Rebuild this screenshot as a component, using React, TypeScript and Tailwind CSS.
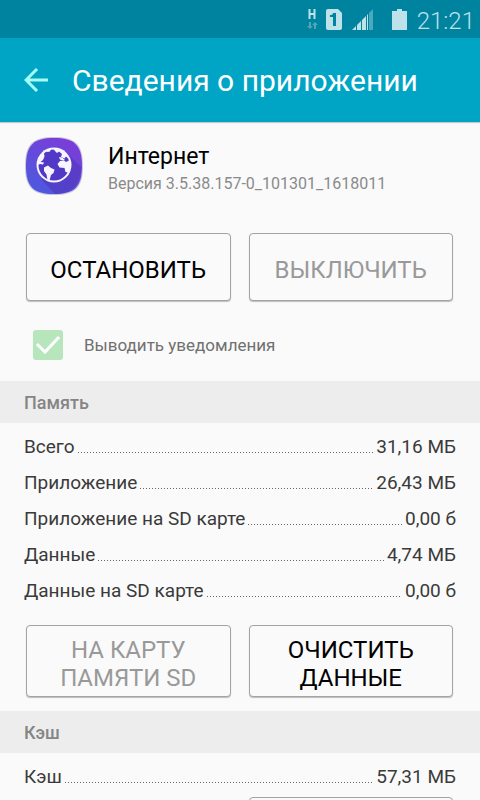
import type { ReactNode } from "react";

type Entry = { label: string; value: string };

const memory: Entry[] = [
  { label: "Всего", value: "31,16 МБ" },
  { label: "Приложение", value: "26,43 МБ" },
  { label: "Приложение на SD карте", value: "0,00 б" },
  { label: "Данные", value: "4,74 МБ" },
  { label: "Данные на SD карте", value: "0,00 б" },
];

function StatusBar() {
  return (
    <div className="flex h-[38px] shrink-0 items-center justify-end bg-[#00839f] pr-[5px] text-[#bde2ea]">
      <svg width="12" height="22" viewBox="0 0 12 22" className="mr-[7px]" aria-label="HSPA">
        <path d="M2.500 1v10M7.500 1v10M2 6h6" stroke="currentColor" strokeWidth="2" fill="none" />
        <g fill="#4da8bb">
          <path d="M2 14h2v4h2l-3 3-3-3h2zM7 21h2v-4h2l-3-3-3 3h2z" />
        </g>
      </svg>
      <svg width="16" height="22" viewBox="0 0 16 22" className="mr-2.5" aria-label="SIM 1">
        <path fill="currentColor" d="M2 1h10l4 4v15q0 2-2 2H2q-2 0-2-2V3q0-2 2-2z" />
        <path fill="#00839f" d="M7 5h3v13H7V9H4V7q3 0 3-2z" />
      </svg>
      <svg width="21" height="22" viewBox="0 0 21 22" className="mr-[19px]" aria-label="Сигнал">
        <path fill="currentColor" d="M0 22l4-4v4zM5 17l4-4v9H5zM10 12l4-4v14h-4z" />
        <path fill="currentColor" d="M15 7l1-1v16h-1z" />
        <path fill="#4da8bb" d="M17 5l4-4v21h-4z" />
      </svg>
      <svg width="15" height="22" viewBox="0 0 15 22" className="mr-2.5" aria-label="Батарея">
        <path fill="currentColor" d="M5 1h5v2h5v19H0V3h5z" />
      </svg>
      <span className="pt-1 text-2xl font-light leading-7">21:21</span>
    </div>
  );
}

function AppIcon() {
  return (
    <svg width="60" height="60" viewBox="0 0 60 60" aria-label="Интернет">
      <defs>
        <linearGradient id="tile" x1="0.8" y1="0" x2="0.2" y2="1">
          <stop offset="0" stopColor="#7d3bd8" />
          <stop offset="1" stopColor="#4b5ade" />
        </linearGradient>
      </defs>
      <path d="M30 1C51 1 59 8 59 30S51 59 30 59 1 52 1 30 9 1 30 1z" fill="#c9c5d8" />
      <path d="M30 2C50.500 2 58 9 58 30S50.500 58 30 58 2 51 2 30 9.500 2 30 2z" fill="url(#tile)" />
      <path d="M43 17L57 31Q57 57 32 58h-1L17 43z" fill="#4a2fb0" opacity=".45" />
      <circle cx="30" cy="29" r="17.500" fill="#f7f5ff" />
      <circle cx="30" cy="29" r="15.500" fill="#5238c6" />
      <g fill="#f7f5ff">
        <path d="M14 29L14 22 19 16 24 13 27 13 26 15.500 23.500 16 22 15.500 20 17.500 20.500 20.500 19 24 16.500 26 20 26.500 19 28.500 16 28z" />
        <path d="M29 12.500L37 14 42 18 45 23 42 20.500 40.500 22.500 37 21 38 18 35 15.500 33 17 31 15z" />
        <path d="M35 21l3 .5 3 2.500-2 .5-3-1z" />
        <path d="M33.500 28L36 25 40 24.500 42 26 46 24 47 30 45.500 35 44 36.500 41.500 36 40.500 32 35.500 31.500z" />
        <path d="M20 31.500L24 29.500 27 32 30.500 33.500 29.500 37 27 39 25.500 44.500 23.500 44 22.500 38.500 20 35z" />
      </g>
    </svg>
  );
}

type ActionButtonProps = { children?: ReactNode; disabled?: boolean; label?: string };

function ActionButton({ children, disabled = false, label }: ActionButtonProps) {
  return (
    <button
      type="button"
      disabled={disabled}
      aria-label={label}
      className="min-h-[68px] rounded border border-[#a3a3a3] bg-[#fafafa] px-4 pb-1 pt-2.5 text-2xl leading-7 text-black shadow-[0_1px_1px_#bdbdbd] disabled:text-[#999999]"
    >
      {children}
    </button>
  );
}

function SectionHeader({ children }: { children: ReactNode }) {
  return (
    <h2 className="flex h-[42px] items-center bg-[#ededed] px-6 pt-0.5 text-lg font-medium text-[#858585]">
      {children}
    </h2>
  );
}

function Entries({ items }: { items: Entry[] }) {
  return (
    <dl className="px-6 pt-1.5 text-[19px] text-[#3a3a3a]">
      {items.map((item) => (
        <div key={item.label} className="flex h-9 items-center">
          <dt>{item.label}</dt>
          <dd className="flex flex-1 items-center">
            <span className="mx-[3px] mt-2.5 h-px flex-1 bg-[repeating-linear-gradient(90deg,#666666_0_1px,transparent_1px_3px)]" />
            {item.value}
          </dd>
        </div>
      ))}
    </dl>
  );
}

export default function App() {
  return (
    <div className="flex h-screen flex-col overflow-hidden bg-[#fafafa] font-[Roboto,sans-serif]">
      <StatusBar />
      <header className="flex h-[84px] shrink-0 items-center bg-[#00a5c6] px-6 shadow-[0_1px_1px_#c8c8d2]">
        <button type="button" aria-label="Назад" className="mr-6">
          <svg width="24" height="24" viewBox="0 0 24 24" fill="none" stroke="#a5fff5" strokeWidth="3">
            <path d="M24 12H2M13 1L2 12l11 11" />
          </svg>
        </button>
        <h1 className="pt-0.5 text-[30px] leading-9 text-white">Сведения о приложении</h1>
      </header>
      <main className="min-h-0 flex-1 overflow-y-auto [scrollbar-width:none]">
        <div className="flex items-start px-6 pt-3.5">
          <AppIcon />
          <div className="ml-6 pt-[7px]">
            <h2 className="text-[23px] leading-7 text-black">Интернет</h2>
            <p className="text-base leading-[26px] text-[#8a8a8a]">Версия 3.5.38.157-0_101301_1618011</p>
          </div>
        </div>
        <div className="grid grid-cols-2 gap-[18px] pl-[26px] pr-[27px] pt-9">
          <ActionButton>ОСТАНОВИТЬ</ActionButton>
          <ActionButton disabled>ВЫКЛЮЧИТЬ</ActionButton>
        </div>
        <label className="flex h-20 items-center px-[33px] pt-2 text-[17px] text-[#707070]">
          <span className="mr-[21px] grid">
            <input
              type="checkbox"
              defaultChecked
              disabled
              className="col-start-1 row-start-1 size-[30px] appearance-none rounded-[3px] bg-[#b7e5bc]"
            />
            <svg
              width="30"
              height="30"
              viewBox="0 0 30 30"
              className="pointer-events-none col-start-1 row-start-1"
              fill="none"
              stroke="white"
              strokeWidth="3"
            >
              <path d="M4 14l8 8L26 7" />
            </svg>
          </span>
          <span className="pt-0.5">Выводить уведомления</span>
        </label>
        <section>
          <SectionHeader>Память</SectionHeader>
          <Entries items={memory} />
          <div className="grid grid-cols-2 gap-[18px] pb-3.5 pl-[26px] pr-[27px] pt-4">
            <ActionButton disabled>
              НА КАРТУ
              <br />
              ПАМЯТИ SD
            </ActionButton>
            <ActionButton>
              ОЧИСТИТЬ
              <br />
              ДАННЫЕ
            </ActionButton>
          </div>
        </section>
        <section>
          <SectionHeader>Кэш</SectionHeader>
          <Entries items={[{ label: "Кэш", value: "57,31 МБ" }]} />
          <div className="grid grid-cols-2 gap-[18px] pb-3.5 pl-[26px] pr-[27px] pt-0.5">
            <span />
            <ActionButton label="Очистить кэш" />
          </div>
        </section>
      </main>
    </div>
  );
}
